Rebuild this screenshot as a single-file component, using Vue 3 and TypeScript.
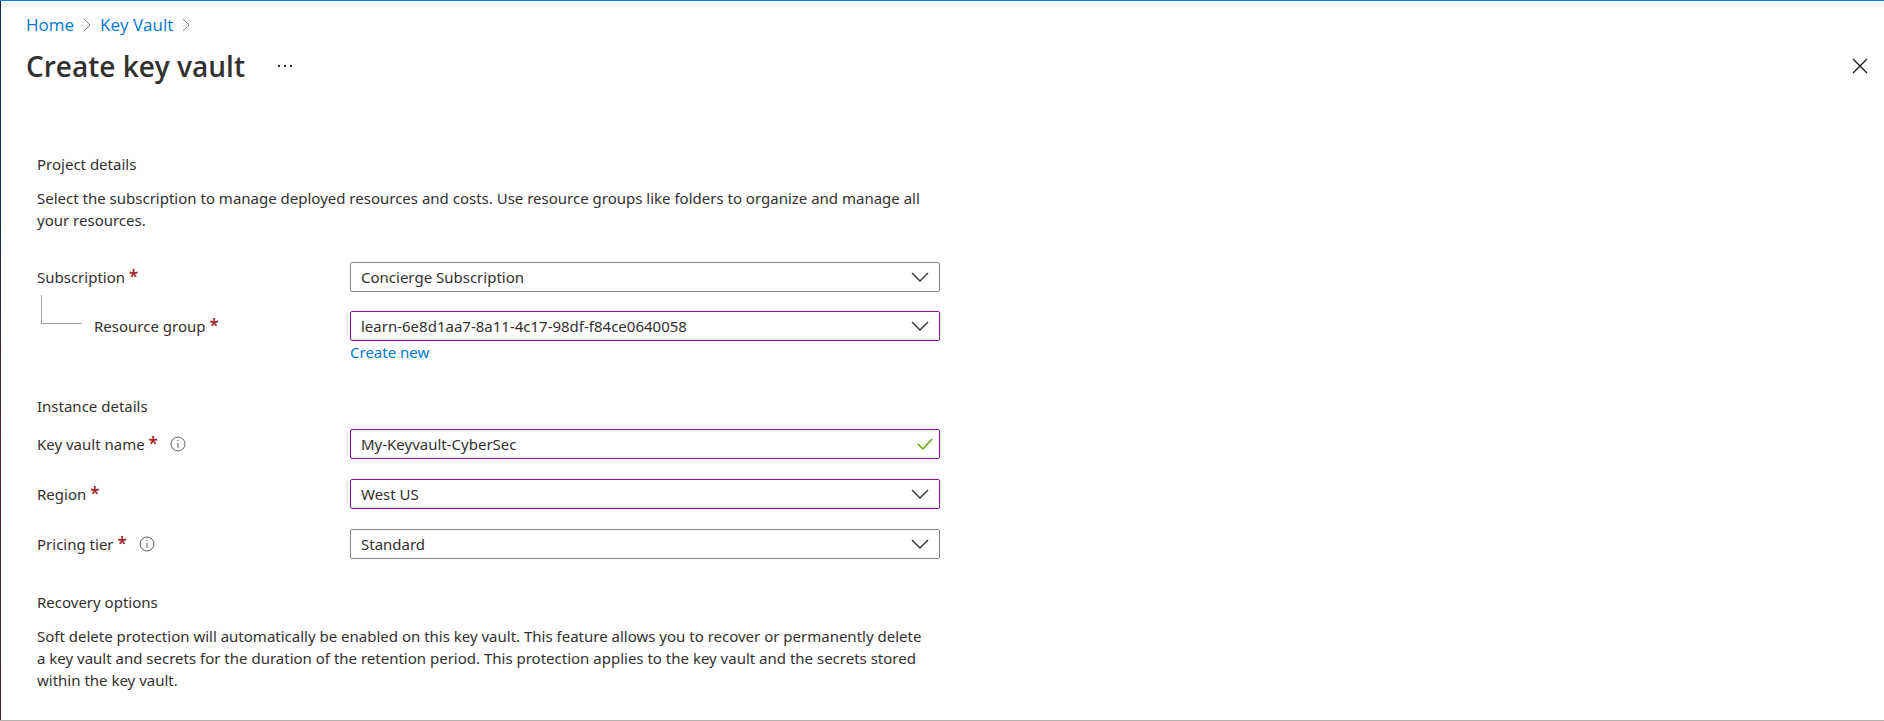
<script setup lang="ts">
import { ref } from 'vue'

interface Crumb {
  label: string
  href: string
}

const crumbs: Crumb[] = [
  { label: 'Home', href: '#home' },
  { label: 'Key Vault', href: '#key-vault' },
]

const subscriptions: string[] = ['Concierge Subscription']
const resourceGroups: string[] = ['learn-6e8d1aa7-8a11-4c17-98df-f84ce0640058']
const regions: string[] = ['West US']
const tiers: string[] = ['Standard']

const subscription = ref(subscriptions[0])
const resourceGroup = ref(resourceGroups[0])
const vaultName = ref('My-Keyvault-CyberSec')
const region = ref(regions[0])
const tier = ref(tiers[0])
</script>

<template>
  <div class="blade">
    <header class="blade-header">
      <nav class="breadcrumb" aria-label="Breadcrumb">
        <template v-for="crumb in crumbs" :key="crumb.label">
          <a :href="crumb.href">{{ crumb.label }}</a>
          <svg class="crumb-arrow" viewBox="0 0 8 14" aria-hidden="true">
            <path d="M1 1l6 6-6 6" />
          </svg>
        </template>
      </nav>
      <div class="title-row">
        <h1>Create key vault</h1>
        <button class="icon-button more" type="button" aria-label="More actions">
          <svg viewBox="0 0 16 4" aria-hidden="true">
            <rect x="1" y="1" width="2" height="2" />
            <rect x="7" y="1" width="2" height="2" />
            <rect x="13" y="1" width="2" height="2" />
          </svg>
        </button>
        <button class="icon-button close" type="button" aria-label="Close">
          <svg viewBox="0 0 16 16" aria-hidden="true">
            <path d="M1 1l14 14M15 1L1 15" />
          </svg>
        </button>
      </div>
    </header>

    <form class="form" @submit.prevent>
      <section>
        <h2>Project details</h2>
        <p>
          Select the subscription to manage deployed resources and costs. Use resource groups like
          folders to organize and manage all your resources.
        </p>
        <div class="rows">
          <div class="row">
            <div class="label">
              <label for="subscription">Subscription <span class="required">*</span></label>
            </div>
            <div class="control">
              <select id="subscription" v-model="subscription">
                <option v-for="item in subscriptions" :key="item">{{ item }}</option>
              </select>
              <svg class="chevron" viewBox="0 0 18 10" aria-hidden="true"><path d="M1 1l8 8 8-8" /></svg>
            </div>
          </div>
          <div class="row">
            <div class="label nested">
              <span class="branch"></span>
              <label for="resource-group">Resource group <span class="required">*</span></label>
            </div>
            <div class="control">
              <select id="resource-group" v-model="resourceGroup" class="edited">
                <option v-for="item in resourceGroups" :key="item">{{ item }}</option>
              </select>
              <svg class="chevron" viewBox="0 0 18 10" aria-hidden="true"><path d="M1 1l8 8 8-8" /></svg>
            </div>
            <a class="create" href="#create-new">Create new</a>
          </div>
        </div>
      </section>

      <section>
        <h2>Instance details</h2>
        <div class="rows instance">
          <div class="row">
            <div class="label">
              <label for="vault-name">Key vault name <span class="required">*</span></label>
              <svg class="info" viewBox="0 0 16 16" role="img" aria-label="Information">
                <circle cx="8" cy="8" r="7" />
                <path d="M8 7v5M8 4v1" />
              </svg>
            </div>
            <div class="control">
              <input id="vault-name" v-model="vaultName" class="edited" type="text" />
              <svg class="check" viewBox="0 0 16 12" aria-hidden="true"><path d="M1 6l5 5 9-10" /></svg>
            </div>
          </div>
          <div class="row">
            <div class="label">
              <label for="region">Region <span class="required">*</span></label>
            </div>
            <div class="control">
              <select id="region" v-model="region" class="edited">
                <option v-for="item in regions" :key="item">{{ item }}</option>
              </select>
              <svg class="chevron" viewBox="0 0 18 10" aria-hidden="true"><path d="M1 1l8 8 8-8" /></svg>
            </div>
          </div>
          <div class="row">
            <div class="label">
              <label for="tier">Pricing tier <span class="required">*</span></label>
              <svg class="info" viewBox="0 0 16 16" role="img" aria-label="Information">
                <circle cx="8" cy="8" r="7" />
                <path d="M8 7v5M8 4v1" />
              </svg>
            </div>
            <div class="control">
              <select id="tier" v-model="tier">
                <option v-for="item in tiers" :key="item">{{ item }}</option>
              </select>
              <svg class="chevron" viewBox="0 0 18 10" aria-hidden="true"><path d="M1 1l8 8 8-8" /></svg>
            </div>
          </div>
        </div>
      </section>

      <section>
        <h2>Recovery options</h2>
        <p>
          Soft delete protection will automatically be enabled on this key vault. This feature allows
          you to recover or permanently delete a key vault and secrets for the duration of the
          retention period. This protection applies to the key vault and the secrets stored within
          the key vault.
        </p>
      </section>
    </form>
  </div>
</template>

<style>
body {
  margin: 0;
  background: #fff;
}
</style>

<style scoped>
.blade {
  box-sizing: border-box;
  min-height: 100vh;
  padding-left: 1px;
  border-top: 1px solid #0078d4;
  border-bottom: 1px solid #b3b0ad;
  background: linear-gradient(#14284b 30%, #55262c 60%, #3f2433) left / 1px 100% no-repeat;
  color: #323130;
  font: 15px/22px 'Segoe UI', 'Noto Sans', 'Open Sans', sans-serif;
}

a {
  color: #0078d4;
  text-decoration: none;
}

.blade-header {
  padding: 12px 16px 0 25px;
  font-family: 'Segoe UI', 'Open Sans', 'Noto Sans', sans-serif;
}

.breadcrumb {
  display: flex;
  align-items: center;
  gap: 9px;
  font-size: 17px;
  line-height: 24px;
}

.crumb-arrow {
  width: 8px;
  height: 14px;
  fill: none;
  stroke: #8a8886;
}

.title-row {
  display: flex;
  align-items: center;
  margin-top: 9px;
}

h1 {
  margin: 0;
  font-size: 28px;
  font-weight: 600;
  line-height: 40px;
}

.icon-button {
  display: flex;
  padding: 0;
  border: 0;
  background: none;
}

.more {
  margin-left: 32px;
}

.more svg {
  width: 16px;
  height: 4px;
  fill: #323130;
}

.close {
  margin-left: auto;
}

.close svg {
  width: 16px;
  height: 16px;
  fill: none;
  stroke: #1b1a19;
  stroke-width: 1.4;
}

.form {
  display: flex;
  flex-direction: column;
  gap: 32px;
  max-width: 903px;
  padding: 67px 36px 27px;
}

h2 {
  margin: 0;
  font-size: 15px;
  font-weight: 400;
  line-height: 22px;
}

p {
  margin: 12px 8px 0 0;
}

.rows {
  display: flex;
  flex-direction: column;
  gap: 19px;
  margin-top: 31px;
}

.rows.instance {
  gap: 20px;
  margin-top: 12px;
}

.row {
  display: grid;
  grid-template-columns: 313px minmax(0, 1fr);
}

.label {
  display: flex;
  align-items: center;
  gap: 12px;
}

.label.nested {
  position: relative;
  padding-left: 57px;
}

.branch {
  position: absolute;
  left: 4px;
  bottom: 17px;
  width: 40px;
  height: 28px;
  border: solid #a19f9d;
  border-width: 0 0 1px 1px;
}

.required {
  color: #a4262c;
  font-weight: 600;
  font-size: 17px;
  line-height: 17px;
}

.info {
  width: 16px;
  height: 16px;
  fill: none;
  stroke: #605e5c;
}

.control {
  display: grid;
  align-items: center;
}

.control > * {
  grid-area: 1 / 1;
}

select,
input {
  box-sizing: border-box;
  width: 100%;
  height: 30px;
  margin: 0;
  padding: 0 40px 0 10px;
  border: 1px solid #8a8886;
  border-radius: 2px;
  background: #fff;
  color: inherit;
  font: inherit;
  appearance: none;
}

.edited {
  border-color: #881798;
}

.chevron,
.check {
  justify-self: end;
  fill: none;
  pointer-events: none;
  stroke-width: 1.4;
}

.chevron {
  width: 18px;
  height: 10px;
  margin-right: 11px;
  stroke: #323130;
}

.check {
  width: 16px;
  height: 12px;
  margin-right: 7px;
  stroke: #57a300;
}

.create {
  grid-column: 2;
  justify-self: start;
}
</style>
